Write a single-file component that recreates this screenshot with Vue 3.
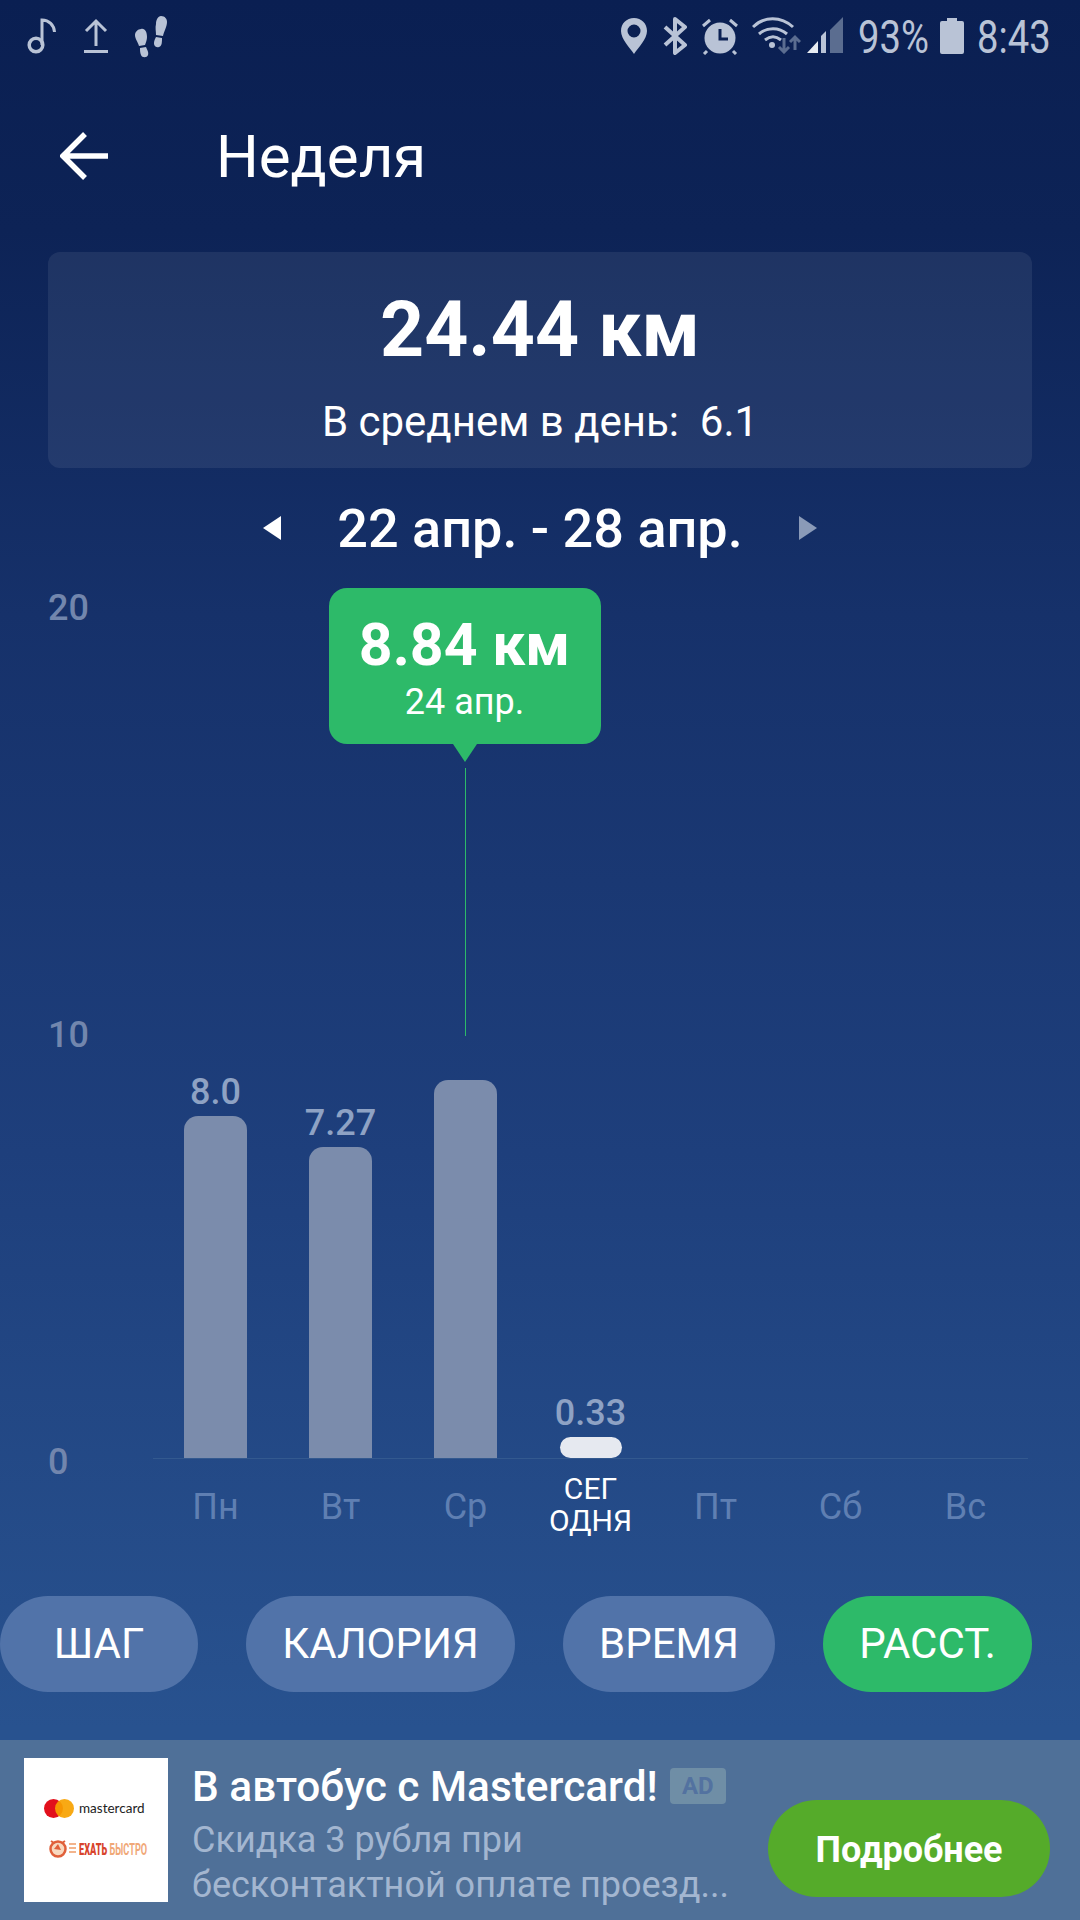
<script setup>
const axis = [20, 10, 0]
const days = [
  { key: 'mon', label: 'Пн', value: '8.0', height: 342 },
  { key: 'tue', label: 'Вт', value: '7.27', height: 311 },
  { key: 'wed', label: 'Ср', value: '', height: 378, selected: true },
  { key: 'thu', label: 'СЕГ', label2: 'ОДНЯ', value: '0.33', height: 21, today: true },
  { key: 'fri', label: 'Пт', value: '', height: 0 },
  { key: 'sat', label: 'Сб', value: '', height: 0 },
  { key: 'sun', label: 'Вс', value: '', height: 0 }
]
const tabs = [
  { name: 'ШАГ' },
  { name: 'КАЛОРИЯ' },
  { name: 'ВРЕМЯ' },
  { name: 'РАССТ.', active: true }
]
</script>

<template>
  <div class="screen">
    <div class="status">
      <div class="status-left">
        <svg class="ic" width="30" height="38" viewBox="0 0 30 38"><circle cx="9" cy="28" r="6.800" fill="none" stroke="#b9c3d6" stroke-width="3.500"/><path d="M15 28V3c7 0 12 5 12.500 12" fill="none" stroke="#b9c3d6" stroke-width="3"/></svg>
        <svg class="ic up" width="24" height="36" viewBox="0 0 24 36"><path d="M12 28V3M2 13L12 3l10 10" fill="none" stroke="#b9c3d6" stroke-width="3"/><rect y="32" width="24" height="3" fill="#b9c3d6"/></svg>
        <svg class="ic feet" width="34" height="44" viewBox="0 0 34 44"><g fill="#b9c3d6"><path d="M7 14c4-1 6 3 6 8 0 3-1 5-2 8l-6 1C4 27 1 24 1 20c0-3 3-6 6-6z"/><path d="M6 33l6-1c1 3 3 5 2 8-1 3-6 3-7 0-1-2-1-5-1-7z"/><path d="M27 1c4 0 6 3 6 6 0 5-3 9-4 14l-7-1c0-4-1-7 0-11 0-4 2-8 5-8z"/><path d="M22 22l6 1c0 4 0 8-3 9-4 1-5-2-5-4 0-2 1-4 2-6z"/></g></svg>
      </div>
      <div class="status-right">
        <svg class="pin" width="26" height="36" viewBox="0 0 26 36"><path fill-rule="evenodd" d="M13 0c7.500 0 13 5.500 13 13 0 8-9 17-13 23C9 30 0 21 0 13 0 5.500 5.500 0 13 0zm0 6.500a6.500 6.500 0 100 13 6.500 6.500 0 000-13z" fill="#b9c3d6"/></svg>
        <svg class="bt" width="25" height="38" viewBox="0 0 25 38"><path d="M2 10l20 18-10 8V2l10 8L2 28" fill="none" stroke="#b9c3d6" stroke-width="4" stroke-linejoin="round"/></svg>
        <svg class="alarm" width="36" height="37" viewBox="0 0 36 37"><circle cx="18" cy="20" r="15.500" fill="#b9c3d6"/><path d="M1 8l7-6M35 8l-7-6M5 33l-3 3M31 33l3 3" stroke="#b9c3d6" stroke-width="3"/><path d="M18 11v10h8" fill="none" stroke="#0b2053" stroke-width="3"/></svg>
        <svg class="wifi" width="49" height="37" viewBox="0 0 49 37"><path d="M1 10c11-11 28-11 40 0M7 17c8-7 20-7 28 0M13 23c5-4 11-4 16 0" fill="none" stroke="#b9c3d6" stroke-width="3"/><circle cx="20" cy="28" r="3" fill="#b9c3d6"/><path d="M32 21v14M27 30l5 5 5-5" fill="none" stroke="#5b6d90" stroke-width="3"/><path d="M43 33V20M38 25l5-5 5 5" fill="none" stroke="#5b6d90" stroke-width="3"/></svg>
        <svg class="signal" width="36" height="36" viewBox="0 0 36 36"><path d="M0 36l11-12v12z" fill="#e8ecf2"/><path d="M14 36V19l5-5v22z" fill="#b9c3d6"/><path d="M23 36V13L36 0v36z" fill="#5b6d90"/></svg>
        <span class="st-text pct">93%</span>
        <svg class="batt" width="24" height="36" viewBox="0 0 24 36"><path d="M7 0h10v3h5q2 0 2 2v29q0 2-2 2H2q-2 0-2-2V5q0-2 2-2h5z" fill="#b9c3d6"/></svg>
        <span class="st-text time">8:43</span>
      </div>
    </div>

    <header class="header">
      <svg class="back" width="48" height="48" viewBox="0 0 48 48"><path d="M48 24H4M25 2L3 24l22 22" fill="none" stroke="#fff" stroke-width="5.500"/></svg>
      <h1 class="title">Неделя</h1>
    </header>

    <section class="summary">
      <div class="total">24.44 км</div>
      <div class="avg">В среднем в день:&nbsp; 6.1</div>
    </section>

    <div class="range">
      <span class="tri tri-left"></span>
      <span class="range-text">22 апр. - 28 апр.</span>
      <span class="tri tri-right"></span>
    </div>

    <section class="chart">
      <div class="axis">
        <span v-for="n in axis" :key="n">{{ n }}</span>
      </div>
      <div class="plot">
        <div v-for="d in days" :key="d.key" class="col">
          <template v-if="d.selected">
            <div class="tip">
              <div class="tip-value">8.84 км</div>
              <div class="tip-date">24 апр.</div>
              <span class="tip-caret"></span>
            </div>
            <span class="guide"></span>
          </template>
          <span v-if="d.value" class="val">{{ d.value }}</span>
          <div v-if="d.height" class="bar" :class="{ today: d.today }" :style="{ height: d.height + 'px' }"></div>
        </div>
      </div>
      <div class="labels">
        <div v-for="d in days" :key="d.key" class="lab" :class="{ 'lab-today': d.today }">
          {{ d.label }}<template v-if="d.label2"><br>{{ d.label2 }}</template>
        </div>
      </div>
    </section>

    <nav class="tabs">
      <span v-for="t in tabs" :key="t.name" class="tab" :class="{ active: t.active }">{{ t.name }}</span>
    </nav>

    <aside class="ad">
      <div class="ad-img">
        <div class="mc">
          <span class="mc-logo"><i class="c1"></i><i class="c2"></i></span>
          <span class="mc-name">mastercard</span>
        </div>
        <div class="fast">
          <svg width="18" height="20" viewBox="0 0 18 20"><circle cx="9" cy="10" r="7.500" fill="#f8d9c0" stroke="#e0603a" stroke-width="2.500"/><path d="M5 10l4-5 3 6z" fill="#e0603a"/><path d="M2 2l3 2M16 2l-3 2" stroke="#e0603a" stroke-width="2"/></svg>
          <span class="dash"></span>
          <span class="fast-text"><b>ЕХАТЬ</b> <em>БЫСТРО</em></span>
        </div>
      </div>
      <div class="ad-text">
        <div class="ad-title-row">
          <span class="ad-title">В автобус с Mastercard!</span>
          <span class="ad-badge">AD</span>
        </div>
        <p class="ad-sub">Скидка 3 рубля при<br>бесконтактной оплате проезд...</p>
      </div>
      <div class="ad-btn">Подробнее</div>
    </aside>
  </div>
</template>

<style scoped>
.screen {
  width: 1080px;
  height: 1920px;
  overflow: hidden;
  display: flex;
  flex-direction: column;
  background: linear-gradient(180deg, #0a1f52 0%, #0d2356 12%, #16316a 32%, #1e3f7c 60%, #28528f 90%, #28528f 100%);
  font-family: Roboto, "Noto Sans", sans-serif;
  color: #fff;
}
.status {
  height: 75px;
  flex: none;
  display: flex;
  justify-content: space-between;
  align-items: flex-start;
  position: relative;
}
.status-left {
  display: flex;
  align-items: flex-start;
  padding: 17px 0 0 27px;
}
.ic { display: block; }
.up { margin: 1px 0 0 27px; }
.feet { margin: -2px 0 0 26px; }
.status-right {
  display: flex;
  align-items: flex-start;
  padding: 17px 27px 0 0;
}
.pin { display: block; margin-top: 1px; }
.bt { display: block; margin-left: 16px; }
.alarm { display: block; margin: 1px 0 0 14px; }
.wifi { display: block; margin-left: 14px; }
.signal { display: block; margin-left: 6px; }
.batt { display: block; margin: 1px 0 0 12px; }
.st-text {
  font-size: 46px;
  line-height: 40px;
  color: #b9c3d6;
  font-weight: 400;
  display: block;
  transform-origin: left center;
  transform: scaleX(.83);
  white-space: nowrap;
}
.pct { width: 70px; margin-left: 15px; }
.time { width: 76px; margin-left: 13px; }
.header {
  height: 76px;
  margin-top: 43px;
  flex: none;
  display: flex;
  align-items: center;
  padding-left: 60px;
}
.back { display: block; }
.title {
  margin: 2px 0 0 108px;
  font-size: 60px;
  font-weight: 400;
  line-height: 76px;
}
.summary {
  flex: none;
  margin: 58px 48px 0;
  height: 216px;
  border-radius: 12px;
  background: rgba(255, 255, 255, .075);
  text-align: center;
}
.total {
  font-size: 77px;
  font-weight: 700;
  line-height: 92px;
  padding-top: 32px;
}
.avg {
  font-size: 42px;
  line-height: 48px;
  margin-top: 22px;
}
.range {
  flex: none;
  height: 60px;
  margin-top: 30px;
  display: flex;
  justify-content: center;
  align-items: center;
}
.range-text {
  font-size: 54px;
  font-weight: 500;
  margin: 2px 56px 0;
  line-height: 60px;
}
.tri {
  width: 0;
  height: 0;
  border-top: 12px solid transparent;
  border-bottom: 12px solid transparent;
}
.tri-left { border-right: 18px solid #fff; }
.tri-right { border-left: 18px solid #8a9ab8; }
.chart {
  flex: none;
  margin-top: 28px;
  display: grid;
  grid-template-columns: 153px 875px;
  grid-template-rows: 873px 94px;
}
.axis {
  grid-column: 1;
  grid-row: 1 / 3;
  height: 898px;
  padding-left: 48px;
  display: flex;
  flex-direction: column;
  justify-content: space-between;
  font-size: 36px;
  font-weight: 500;
  line-height: 44px;
  color: #7286ad;
}
.plot {
  grid-column: 2;
  grid-row: 1;
  display: grid;
  grid-template-columns: repeat(7, 125px);
  border-bottom: 1px solid #33598f;
  align-items: end;
}
.col {
  position: relative;
  display: flex;
  flex-direction: column;
  align-items: center;
}
.val {
  font-size: 36px;
  font-weight: 500;
  line-height: 42px;
  height: 42px;
  color: #8ea2c4;
  margin-bottom: 3px;
}
.bar {
  width: 63px;
  background: #7b8cac;
  border-radius: 14px 14px 0 0;
}
.bar.today {
  background: #e6e9f0;
  border-radius: 14px;
  width: 62px;
}
.tip {
  position: absolute;
  left: 50%;
  bottom: 714px;
  margin-left: -1px;
  transform: translateX(-50%);
  width: 272px;
  height: 156px;
  border-radius: 18px;
  background: #2dba69;
  text-align: center;
}
.tip-value {
  font-size: 59px;
  font-weight: 700;
  line-height: 64px;
  padding-top: 25px;
}
.tip-date {
  font-size: 36px;
  line-height: 44px;
  margin-top: 3px;
}
.tip-caret {
  position: absolute;
  left: 50%;
  top: 100%;
  margin-left: -12px;
  width: 0;
  height: 0;
  border-left: 12px solid transparent;
  border-right: 12px solid transparent;
  border-top: 18px solid #2dba69;
}
.guide {
  position: absolute;
  left: 50%;
  margin-left: -1px;
  bottom: 422px;
  width: 1px;
  height: 268px;
  background: #2dba69;
}
.labels {
  grid-column: 2;
  grid-row: 2;
  display: grid;
  grid-template-columns: repeat(7, 125px);
  align-items: center;
  text-align: center;
  font-size: 36px;
  color: #5f7fb2;
  padding-top: 1px;
}
.lab-today {
  font-size: 30px;
  line-height: 32px;
  color: #fff;
  margin-top: -4px;
}
.tabs {
  flex: none;
  margin-top: 43px;
  height: 96px;
  display: flex;
  gap: 48px;
}
.tab {
  min-width: 198px;
  box-sizing: border-box;
  padding: 0 36.150px;
  border-radius: 48px;
  background: #5173a9;
  font-size: 42px;
  line-height: 96px;
  text-align: center;
}
.tab.active { background: #2dba69; }
.ad {
  flex: none;
  margin-top: 48px;
  height: 180px;
  background: #4f7098;
  display: flex;
  align-items: flex-start;
  position: relative;
}
.ad-img {
  width: 144px;
  height: 144px;
  margin: 18px 0 0 24px;
  background: #fff;
  flex: none;
  display: flex;
  flex-direction: column;
  align-items: flex-start;
  padding: 41px 0 0 20px;
  box-sizing: border-box;
}
.mc { display: flex; align-items: center; height: 19px; }
.mc-logo { position: relative; width: 30px; height: 19px; display: block; }
.mc-logo i {
  position: absolute;
  top: 0;
  width: 19px;
  height: 19px;
  border-radius: 50%;
}
.c1 { left: 0; background: #e2101c; }
.c2 { left: 11px; background: rgba(247, 162, 0, .92); }
.mc-name {
  font-family: Lato, sans-serif;
  font-size: 13.500px;
  line-height: 19px;
  margin-left: 5px;
  color: #222;
}
.fast {
  display: flex;
  align-items: center;
  margin: 21px 0 0 5px;
}
.fast svg { display: block; }
.dash {
  width: 7px;
  height: 12px;
  margin-left: 2px;
  background: repeating-linear-gradient(180deg, #f3b48c 0 2px, #fff 2px 4px);
}
.fast-text {
  display: block;
  font-size: 17px;
  font-weight: 700;
  line-height: 18px;
  white-space: nowrap;
  margin-left: 3px;
  width: 52px;
  transform-origin: left center;
  transform: scaleX(.54);
}
.fast-text b { color: #d8442c; }
.fast-text em { color: #f0a878; font-style: normal; }
.ad-text {
  width: 540px;
  margin-left: 25px;
  flex: none;
}
.ad-title-row {
  display: flex;
  align-items: center;
  margin-top: 25px;
  height: 44px;
}
.ad-title {
  font-size: 42.400px;
  font-weight: 500;
  line-height: 44px;
  white-space: nowrap;
  margin-left: -1px;
}
.ad-badge {
  width: 56px;
  height: 36px;
  margin-left: 12px;
  margin-top: -3px;
  border-radius: 4px;
  background: #6f8ea6;
  color: #5372a0;
  font-size: 24px;
  font-weight: 700;
  line-height: 36px;
  text-align: center;
}
.ad-sub {
  margin: 9px 0 0 -1px;
  font-size: 36px;
  line-height: 45px;
  color: #a3b6d0;
  white-space: nowrap;
}
.ad-btn {
  position: absolute;
  left: 768px;
  top: 60px;
  width: 282px;
  height: 97px;
  border-radius: 49px;
  background: #55ab2a;
  font-size: 36px;
  font-weight: 700;
  line-height: 101px;
  text-align: center;
}
</style>
